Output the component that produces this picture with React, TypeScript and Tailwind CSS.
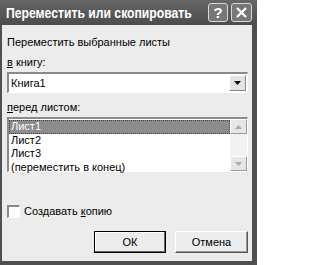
const font = "font-['Liberation_Sans',Arial,sans-serif]"

const Sunken = ({ className = "", children }: { className?: string; children?: React.ReactNode }) => (
	<div className={`border-t-2 border-l-2 border-t-[#8a8a8a] border-l-[#8a8a8a] border-b border-r border-b-white border-r-white ${className}`}>
		{children}
	</div>
)

const Arrow = ({ up, color }: { up?: boolean; color: string }) => (
	<svg width="7" height="4" viewBox="0 0 7 4">
		<polygon points={up ? "0,4 7,4 3.5,0" : "0,0 7,0 3.5,4"} fill={color} />
	</svg>
)

const App = () => {
	return (
		<div className={`w-[257px] h-[265px] bg-[#505050] flex flex-col ${font} select-none`}>
			{/* title bar */}
			<div className="h-[25px] shrink-0 flex items-center pl-[6px] pr-[5px] bg-gradient-to-b from-[#666] to-[#4c4c4c]">
				<div className="flex-1 min-w-0">
					<span className="inline-block whitespace-nowrap text-white font-bold text-[14px] leading-none origin-left scale-x-[0.87]">
						Переместить или скопировать
					</span>
				</div>
				<div className="flex gap-[3px]">
					<div className="w-[20px] h-[19px] rounded-[3px] border border-[#d8d8d8] bg-[#777] flex items-center justify-center text-white text-[15px] font-bold leading-none">
						?
					</div>
					<div className="w-[21px] h-[19px] rounded-[3px] border border-[#d8d8d8] bg-[#777] flex items-center justify-center">
						<svg width="13" height="13" viewBox="0 0 13 13">
							<path d="M2 2 L11 11 M11 2 L2 11" stroke="white" strokeWidth="2.2" />
						</svg>
					</div>
				</div>
			</div>

			{/* body */}
			<div className="flex-1 ml-[2px] mr-[5px] mb-[4px] bg-[#ececec] flex flex-col pl-[5px] pr-[4px] text-[11px] text-black leading-[14px]">
				<div className="mt-[10px]">Переместить выбранные листы</div>
				<div className="mt-[6px]">
					<u>в</u> книгу:
				</div>
				<Sunken className="mt-[3px] h-[21px] bg-white flex">
					<div className="flex-1 pl-[2px] flex items-center">Книга1</div>
					<div className="w-[17px] my-px mr-px bg-[#e4e4e4] border border-t-white border-l-white border-b-[#888] border-r-[#888] flex items-center justify-center">
						<Arrow color="#000" />
					</div>
				</Sunken>
				<div className="mt-[7px]">
					<u>п</u>еред листом:
				</div>
				<Sunken className="mt-[3px] h-[55px] bg-white flex">
					<div className="flex-1 flex flex-col leading-[13.5px] pt-px">
						<div className="bg-[#8c8c8c] text-white pl-[2px] outline outline-1 outline-dotted outline-[#444] -outline-offset-1">Лист1</div>
						<div className="pl-[2px]">Лист2</div>
						<div className="pl-[2px]">Лист3</div>
						<div className="pl-[2px]">(переместить в конец)</div>
					</div>
					<div className="w-[17px] bg-[#f2f2f2] flex flex-col justify-between">
						<div className="h-[15px] bg-[#e6e6e6] border border-t-white border-l-white border-b-[#999] border-r-[#999] flex items-center justify-center">
							<Arrow up color="#aaa" />
						</div>
						<div className="h-[15px] bg-[#e6e6e6] border border-t-white border-l-white border-b-[#999] border-r-[#999] flex items-center justify-center">
							<Arrow color="#aaa" />
						</div>
					</div>
				</Sunken>

				<div className="mt-[32px] flex items-center gap-[4px]">
					<Sunken className="w-[13px] h-[13px] bg-white" />
					<span>
						Создавать <u>к</u>опию
					</span>
				</div>

				<div className="mt-[13px] flex justify-end gap-[9px]">
					<button className="w-[72px] h-[22px] bg-[#ececec] border border-black shadow-[inset_-1px_-1px_0_#666,inset_1px_1px_0_#fff] text-[11px]">
						ОК
					</button>
					<button className="w-[73px] h-[22px] bg-[#ececec] border border-t-white border-l-white border-b-[#555] border-r-[#555] shadow-[inset_-1px_-1px_0_#999] text-[11px]">
						Отмена
					</button>
				</div>
			</div>
		</div>
	)
}

export default App
